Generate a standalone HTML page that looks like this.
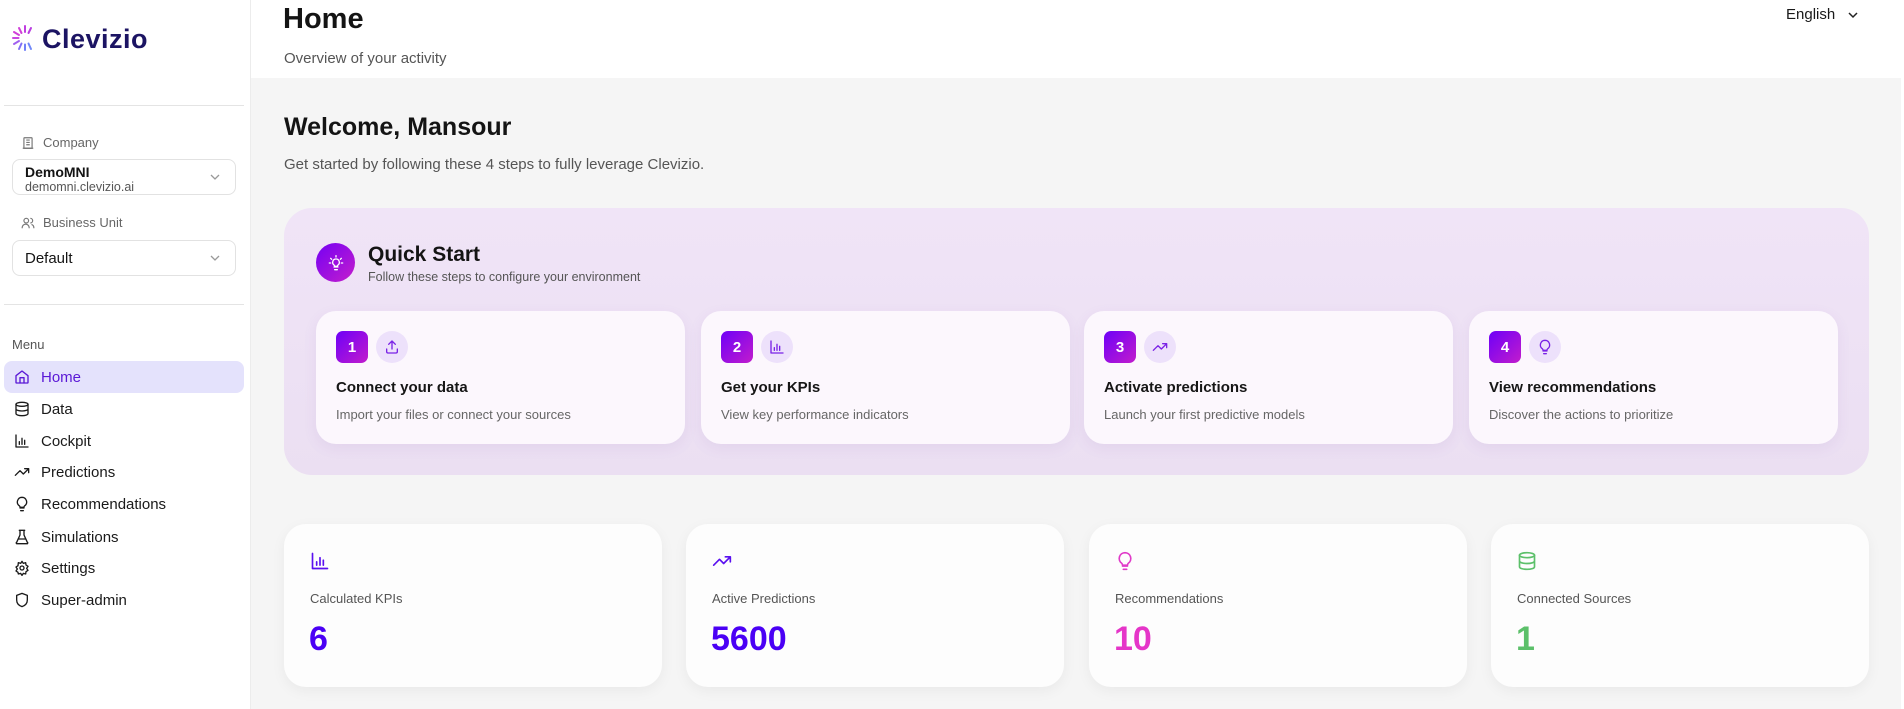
<!DOCTYPE html>
<html><head><meta charset="utf-8"><style>
*{box-sizing:border-box;margin:0;padding:0}
body{width:1904px;height:709px;overflow:hidden;font-family:"Liberation Sans",sans-serif;background:#f5f5f5;position:relative;color:#141414}
.abs{position:absolute}
#side{left:0;top:0;width:251px;height:709px;background:#fff;border-right:1px solid #ececec}
#head{left:251px;top:0;width:1653px;height:78px;background:#fff}
.sel{position:absolute;left:12px;width:224px;border:1px solid #e2e2e2;border-radius:8px;background:#fff}
.chev{position:absolute;right:14px;top:50%;margin-top:-5px}
.lbl{position:absolute;left:21px;font-size:13px;color:#666;display:flex;align-items:center;gap:8px}
.mi{position:absolute;left:4px;width:240px;height:32px;border-radius:8px;display:flex;align-items:center;padding-left:10px;font-size:15px;color:#1a1a1a}
.mi svg{width:16px;height:16px;margin-right:11px;fill:none;stroke:currentColor;stroke-width:2;stroke-linecap:round;stroke-linejoin:round}
.step{position:absolute;top:311px;width:369px;height:133px;background:#fcf7fd;border-radius:20px;box-shadow:0 4px 14px rgba(120,60,160,.08)}
.badge{position:absolute;left:20px;top:20px;width:32px;height:32px;border-radius:7px;background:linear-gradient(135deg,#6e00f8,#c21ccc);color:#fff;font-weight:bold;font-size:15px;display:flex;align-items:center;justify-content:center}
.ic{position:absolute;left:60px;top:20px;width:32px;height:32px;border-radius:50%;background:#ede1fb;display:flex;align-items:center;justify-content:center}
.ic svg,.stat svg{fill:none;stroke-width:2;stroke-linecap:round;stroke-linejoin:round}
.step h3{position:absolute;left:20px;top:68px;font-size:15px;font-weight:bold;color:#161616}
.step p{position:absolute;left:20px;top:96px;font-size:13px;color:#666}
.stat{position:absolute;top:524px;width:378px;height:163px;background:#fdfdfd;border-radius:22px;box-shadow:0 4px 14px rgba(0,0,0,.05)}
.stat svg{position:absolute;left:26px;top:27px;width:20px;height:20px}
.stat .l{position:absolute;left:26px;top:67px;font-size:13px;color:#555}
.stat .n{position:absolute;left:25px;top:96px;font-size:34px;font-weight:bold}
</style></head><body>
<div id="side" class="abs">
  <svg class="abs" style="left:11px;top:24px" width="28" height="28" viewBox="0 0 28 28">
    <g stroke-width="2" stroke-linecap="round">
      <line x1="14" y1="2" x2="14" y2="8" stroke="#c03ee0"/>
      <line x1="20" y1="4" x2="17.5" y2="9" stroke="#b83ee0"/>
      <line x1="8" y1="4" x2="10.5" y2="9" stroke="#d040d8"/>
      <line x1="3" y1="8" x2="8" y2="11" stroke="#d040d8"/>
      <line x1="2" y1="14" x2="7.5" y2="14" stroke="#c848e0"/>
      <line x1="3" y1="20" x2="8" y2="17" stroke="#a060f0"/>
      <line x1="8" y1="25" x2="10.5" y2="19.5" stroke="#8070f5"/>
      <line x1="14" y1="26" x2="14" y2="20.5" stroke="#7080f8"/>
      <line x1="20" y1="25" x2="17.5" y2="19.5" stroke="#7088f8"/>
    </g>
  </svg>
  <div class="abs" style="left:42px;top:24px;font-size:27px;font-weight:bold;color:#1c1463;letter-spacing:0.5px">Clevizio</div>
  <div class="abs" style="left:4px;top:105px;width:240px;height:1px;background:#e4e4e4"></div>
  <div class="lbl" style="top:135px"><svg width="14" height="14" viewBox="0 0 24 24" fill="none" stroke="#777" stroke-width="2"><rect x="5" y="3" width="14" height="18" rx="1"/><path d="M9 7h6M9 11h6M9 15h6M3 21h18"/></svg>Company</div>
  <div class="sel" style="top:159px;height:36px"><div style="position:absolute;left:12px;top:4px;font-size:14px;font-weight:bold">DemoMNI</div><div style="position:absolute;left:12px;top:20px;font-size:12.5px;color:#555">demomni.clevizio.ai</div><svg class="chev" width="12" height="10" viewBox="0 0 12 10"><path d="M2 3l4 4 4-4" fill="none" stroke="#999" stroke-width="1.3"/></svg></div>
  <div class="lbl" style="top:215px"><svg width="14" height="14" viewBox="0 0 24 24" fill="none" stroke="#777" stroke-width="2"><circle cx="9" cy="8" r="4"/><path d="M2 21v-1a6 6 0 0 1 12 0v1M16 4a4 4 0 0 1 0 8M22 21v-1a6 6 0 0 0-4-5.6"/></svg>Business Unit</div>
  <div class="sel" style="top:240px;height:36px"><div style="position:absolute;left:12px;top:9px;font-size:15px">Default</div><svg class="chev" width="12" height="10" viewBox="0 0 12 10"><path d="M2 3l4 4 4-4" fill="none" stroke="#999" stroke-width="1.3"/></svg></div>
  <div class="abs" style="left:4px;top:304px;width:240px;height:1px;background:#e4e4e4"></div>
  <div class="abs" style="left:12px;top:337px;font-size:13px;color:#555">Menu</div>
  <div class="mi" style="top:361px;background:#e4e2fc;color:#5a18d6;font-weight:bold"><svg viewBox="0 0 24 24"><path d="M3 10l9-7 9 7v10a1 1 0 0 1-1 1H4a1 1 0 0 1-1-1z"/><path d="M9 21v-8h6v8"/></svg><span style="font-weight:normal">Home</span></div>
  <div class="mi" style="top:393px"><svg viewBox="0 0 24 24"><ellipse cx="12" cy="5" rx="9" ry="3"/><path d="M3 5v14c0 1.7 4 3 9 3s9-1.3 9-3V5M3 12c0 1.7 4 3 9 3s9-1.3 9-3"/></svg>Data</div>
  <div class="mi" style="top:425px"><svg viewBox="0 0 24 24"><path d="M3 3v18h18M8 17v-4M12 17V8M16 17v-6"/></svg>Cockpit</div>
  <div class="mi" style="top:456px"><svg viewBox="0 0 24 24"><path d="M2 17l7-7 5 5 8-8M16 7h6v6"/></svg>Predictions</div>
  <div class="mi" style="top:488px"><svg viewBox="0 0 24 24"><path d="M9 18h6M10 22h4M12 2a7 7 0 0 0-4 12.7c.6.5 1 1.3 1 2.3h6c0-1 .4-1.8 1-2.3A7 7 0 0 0 12 2z"/></svg>Recommendations</div>
  <div class="mi" style="top:521px"><svg viewBox="0 0 24 24"><path d="M9 2v7L4 20a1 1 0 0 0 1 2h14a1 1 0 0 0 1-2L15 9V2M8 2h8M7 15h10"/></svg>Simulations</div>
  <div class="mi" style="top:552px"><svg viewBox="0 0 24 24"><circle cx="12" cy="12" r="3"/><path d="M12 2l2 3 3.5-1 .5 3.5 3 2-2 3 2 3-3 2-.5 3.5-3.5-1-2 3-2-3-3.5 1L6 18.5l-3-2 2-3-2-3 3-2L6.5 4 10 5z"/></svg>Settings</div>
  <div class="mi" style="top:584px"><svg viewBox="0 0 24 24"><path d="M12 2l8 3v7c0 5-3.5 8.5-8 10-4.5-1.5-8-5-8-10V5z"/></svg>Super-admin</div>
</div>
<div id="head" class="abs">
  <div class="abs" style="left:32px;top:3px;font-size:29px;font-weight:bold">Home</div>
  <div class="abs" style="left:33px;top:50px;font-size:15px;color:#555">Overview of your activity</div>
  <div class="abs" style="left:1535px;top:6px;font-size:15px;color:#1a1a1a">English</div>
  <svg class="abs" style="left:1596px;top:10px" width="12" height="10" viewBox="0 0 12 10"><path d="M2 3l4 4 4-4" fill="none" stroke="#222" stroke-width="1.5"/></svg>
</div>
<div class="abs" style="left:1901px;top:78px;width:3px;height:631px;background:#fff"></div>
<div class="abs" style="left:284px;top:113px;font-size:25px;font-weight:bold">Welcome, Mansour</div>
<div class="abs" style="left:284px;top:156px;font-size:15px;color:#555">Get started by following these 4 steps to fully leverage Clevizio.</div>
<div class="abs" style="left:284px;top:208px;width:1585px;height:267px;border-radius:28px;background:linear-gradient(180deg,#f0e4f7,#ebdff2)"></div>
<div class="abs" style="left:316px;top:243px;width:39px;height:39px;border-radius:50%;background:linear-gradient(135deg,#7400f4,#c41ecc);display:flex;align-items:center;justify-content:center"><svg width="16" height="16" viewBox="0 0 24 24" fill="none" stroke="#fff" stroke-width="2" stroke-linecap="round"><path d="M9 18h6M10 22h4M12 6a5 5 0 0 0-3 9c.5.5 1 1 1 2h4c0-1 .5-1.5 1-2a5 5 0 0 0-3-9zM12 1v2M4 5l1.5 1.5M20 5l-1.5 1.5M2 12h2M20 12h2"/></svg></div>
<div class="abs" style="left:368px;top:243px;font-size:21px;font-weight:bold">Quick Start</div>
<div class="abs" style="left:368px;top:270px;font-size:12.5px;color:#555">Follow these steps to configure your environment</div>

<div class="step" style="left:316px"><div class="badge">1</div><div class="ic"><svg width="16" height="16" viewBox="0 0 24 24" stroke="#7a22e6"><path d="M12 15V3M7 8l5-5 5 5M4 15v4a2 2 0 0 0 2 2h12a2 2 0 0 0 2-2v-4"/></svg></div><h3>Connect your data</h3><p>Import your files or connect your sources</p></div>
<div class="step" style="left:701px"><div class="badge">2</div><div class="ic"><svg width="16" height="16" viewBox="0 0 24 24" stroke="#7a22e6"><path d="M3 3v18h18M8 17v-4M12 17V8M16 17v-6"/></svg></div><h3>Get your KPIs</h3><p>View key performance indicators</p></div>
<div class="step" style="left:1084px"><div class="badge">3</div><div class="ic"><svg width="16" height="16" viewBox="0 0 24 24" stroke="#7a22e6"><path d="M2 17l7-7 5 5 8-8M16 7h6v6"/></svg></div><h3>Activate predictions</h3><p>Launch your first predictive models</p></div>
<div class="step" style="left:1469px"><div class="badge">4</div><div class="ic"><svg width="16" height="16" viewBox="0 0 24 24" stroke="#7a22e6"><path d="M9 18h6M10 22h4M12 2a7 7 0 0 0-4 12.7c.6.5 1 1.3 1 2.3h6c0-1 .4-1.8 1-2.3A7 7 0 0 0 12 2z"/></svg></div><h3>View recommendations</h3><p>Discover the actions to prioritize</p></div>

<div class="stat" style="left:284px"><svg viewBox="0 0 24 24" stroke="#5a10f0"><path d="M3 3v18h18M8 17v-4M12 17V8M16 17v-6"/></svg><div class="l">Calculated KPIs</div><div class="n" style="color:#4a00f5">6</div></div>
<div class="stat" style="left:686px"><svg viewBox="0 0 24 24" stroke="#5a10f0"><path d="M2 17l7-7 5 5 8-8M16 7h6v6"/></svg><div class="l">Active Predictions</div><div class="n" style="color:#4a00f5">5600</div></div>
<div class="stat" style="left:1089px"><svg viewBox="0 0 24 24" stroke="#e03ac8"><path d="M9 18h6M10 22h4M12 2a7 7 0 0 0-4 12.7c.6.5 1 1.3 1 2.3h6c0-1 .4-1.8 1-2.3A7 7 0 0 0 12 2z"/></svg><div class="l">Recommendations</div><div class="n" style="color:#e535c8">10</div></div>
<div class="stat" style="left:1491px"><svg viewBox="0 0 24 24" stroke="#5cc06a"><ellipse cx="12" cy="5" rx="9" ry="3"/><path d="M3 5v14c0 1.7 4 3 9 3s9-1.3 9-3V5M3 12c0 1.7 4 3 9 3s9-1.3 9-3"/></svg><div class="l">Connected Sources</div><div class="n" style="color:#5cc06a">1</div></div>
</body></html>
